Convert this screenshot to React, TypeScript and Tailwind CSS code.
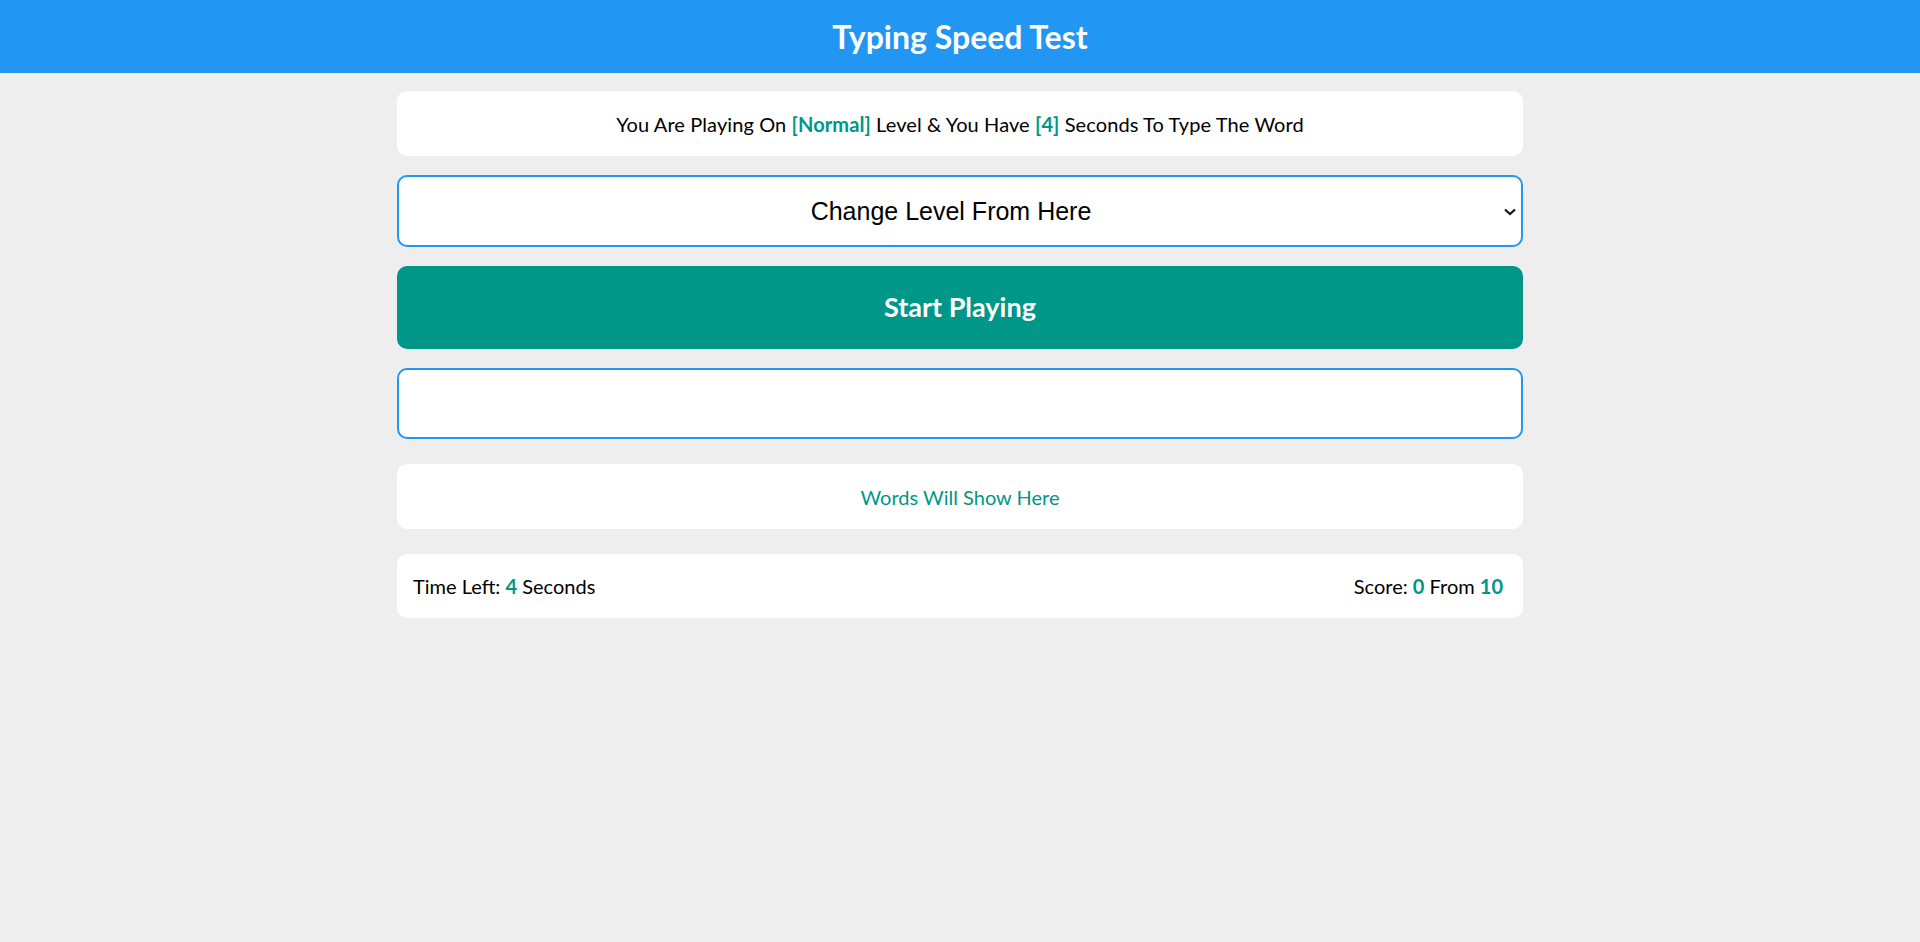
import React from "react";

export default function App() {
  return (
    <div className="min-h-[942px] bg-[#eeeeee] text-black" style={{ fontFamily: "Lato, 'Noto Sans', sans-serif" }}>
      <header className="h-[73px] bg-[#2196f3] flex items-center justify-center">
        <h1 className="text-[32px] font-bold text-white">Typing Speed Test</h1>
      </header>
      <main className="w-[1126px] mx-auto pt-[18px] flex flex-col">
        <div className="h-[65px] bg-white rounded-[10px] flex items-center justify-center text-[20px] tracking-[0.1px]">
          <span>
            You Are Playing On <span className="font-bold text-[#009688]">[Normal]</span> Level &amp; You Have{" "}
            <span className="font-bold text-[#009688]">[4]</span> Seconds To Type The Word
          </span>
        </div>
        <div className="relative mt-[19px] h-[72px] flex">
          <select
            className="appearance-none w-full h-full bg-white border-2 border-[#2196f3] rounded-[10px] text-[25px] text-center pl-[4px] pr-[22px] pt-[2px] outline-none text-black"
            style={{ fontFamily: "'Liberation Sans', Arial, sans-serif" }}
            defaultValue=""
          >
            <option value="">Change Level From Here</option>
            <option value="easy">Easy</option>
            <option value="normal">Normal</option>
            <option value="hard">Hard</option>
          </select>
          <svg
            className="absolute right-[7px] top-[33px] pointer-events-none"
            width="12"
            height="8"
            viewBox="0 0 12 8"
            fill="none"
          >
            <path d="M1 1.5 L6 6 L11 1.5" stroke="#111" strokeWidth="2.2" />
          </svg>
        </div>
        <button className="mt-[19px] h-[83px] bg-[#009688] rounded-[10px] text-white font-bold text-[27px]">
          Start Playing
        </button>
        <input
          type="text"
          className="mt-[19px] h-[71px] bg-white border-2 border-[#2196f3] rounded-[10px] outline-none px-3 text-[20px]"
        />
        <div className="mt-[25px] h-[65px] bg-white rounded-[10px] flex items-center justify-center text-[20px] text-[#009688]">
          Words Will Show Here
        </div>
        <div className="mt-[25px] h-[64px] bg-white rounded-[10px] flex items-center justify-between pl-[16px] pr-[20px] text-[20px]">
          <span>
            Time Left: <span className="font-bold text-[#009688]">4</span> Seconds
          </span>
          <span>
            Score: <span className="font-bold text-[#009688]">0</span> From{" "}
            <span className="font-bold text-[#009688]">10</span>
          </span>
        </div>
      </main>
    </div>
  );
}
